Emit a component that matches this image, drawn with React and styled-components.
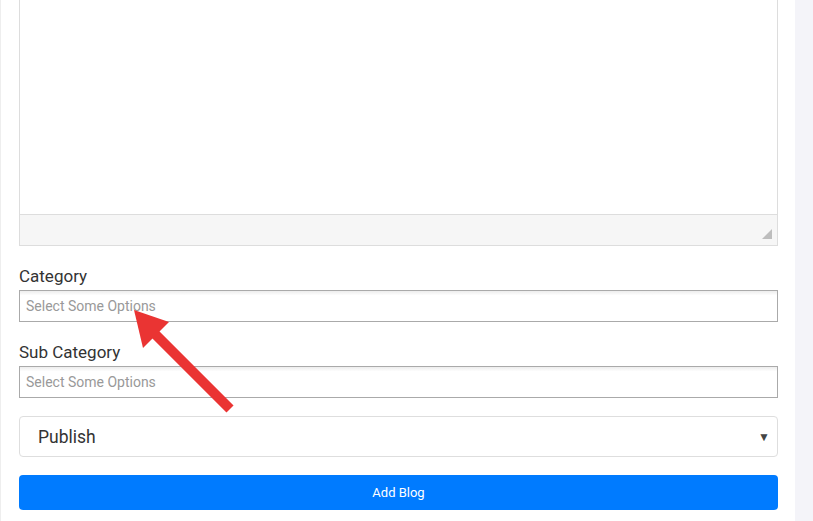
import styled, {createGlobalStyle} from "styled-components";

const Global = createGlobalStyle`
  html, body {
    margin: 0;
    padding: 0;
    background: #fff;
    font-family: Roboto, "Liberation Sans", Arial, sans-serif;
    overflow: hidden;
  }
`

const Page = styled.div`
  display: flex;
  width: 813px;
  height: 521px;
  overflow: hidden;
`

const Main = styled.div`
  position: relative;
  width: 795px;
  box-sizing: border-box;
  padding: 0 17px 0 19px;
  background: #fff;
  border-left: 1px solid #eeeeee;
`

const Side = styled.div`
  flex: 1;
  background: #f4f4f9;
`

const Editor = styled.div`
  display: flex;
  flex-direction: column;
  margin-left: -1px;
  border: 1px solid #dddddd;
  border-top: none;
`

const EditorBody = styled.div`
  height: 214px;
  background: #fff;
`

const StatusBar = styled.div`
  display: flex;
  justify-content: flex-end;
  align-items: flex-end;
  height: 31px;
  padding: 0 5px 6px 0;
  box-sizing: border-box;
  background: #f6f6f6;
  border-top: 1px solid #dddddd;
`

const Grip = styled.div`
  width: 0;
  height: 0;
  border-left: 10px solid transparent;
  border-bottom: 10px solid #bdbdbd;
`

const Field = styled.div`
  display: flex;
  flex-direction: column;
  margin-top: ${p => p.$top}px;
`

const Label = styled.label`
  margin-left: -1px;
  font-size: 17px;
  line-height: 20px;
  color: #333;
  margin-bottom: 4px;
`

const Chosen = styled.div`
  display: flex;
  align-items: center;
  margin-left: -1px;
  height: 32px;
  box-sizing: border-box;
  padding: 0 6px;
  border: 1px solid #aaaaaa;
  background: linear-gradient(#eeeeee 1%, #ffffff 15%);
  font-size: 14px;
  color: #999;
`

const Select = styled.div`
  display: flex;
  align-items: center;
  justify-content: space-between;
  margin-top: 18px;
  margin-left: -1px;
  height: 41px;
  box-sizing: border-box;
  padding: 0 7px 0 18px;
  border: 1px solid #dedede;
  border-radius: 4px;
  font-size: 17.5px;
  color: #333;
`

const Caret = styled.span`
  font-size: 12px;
  color: #444;
`

const Button = styled.button`
  display: block;
  width: 759px;
  margin: 18px 0 0 -1px;
  height: 35px;
  border: none;
  border-radius: 4px;
  background: #007bff;
  color: #fff;
  font-family: Roboto, "Liberation Sans", Arial, sans-serif;
  font-size: 13px;
`

const Arrow = styled.svg`
  position: absolute;
  left: 0;
  top: 0;
  pointer-events: none;
`

export default function App() {
    return (
        <Page>
            <Global/>
            <Main>
                <Editor>
                    <EditorBody/>
                    <StatusBar><Grip/></StatusBar>
                </Editor>
                <Field $top={20}>
                    <Label>Category</Label>
                    <Chosen>Select Some Options</Chosen>
                </Field>
                <Field $top={20}>
                    <Label>Sub Category</Label>
                    <Chosen>Select Some Options</Chosen>
                </Field>
                <Select>
                    <span>Publish</span>
                    <Caret>▼</Caret>
                </Select>
                <Button>Add Blog</Button>
                <Arrow width="260" height="430" viewBox="0 0 260 430">
                    <line x1="229" y1="409" x2="152" y2="332" stroke="#ea3433" strokeWidth="10"/>
                    <polygon points="133,310 142,348 168,322" fill="#ea3433"/>
                </Arrow>
            </Main>
            <Side/>
        </Page>
    );
}
